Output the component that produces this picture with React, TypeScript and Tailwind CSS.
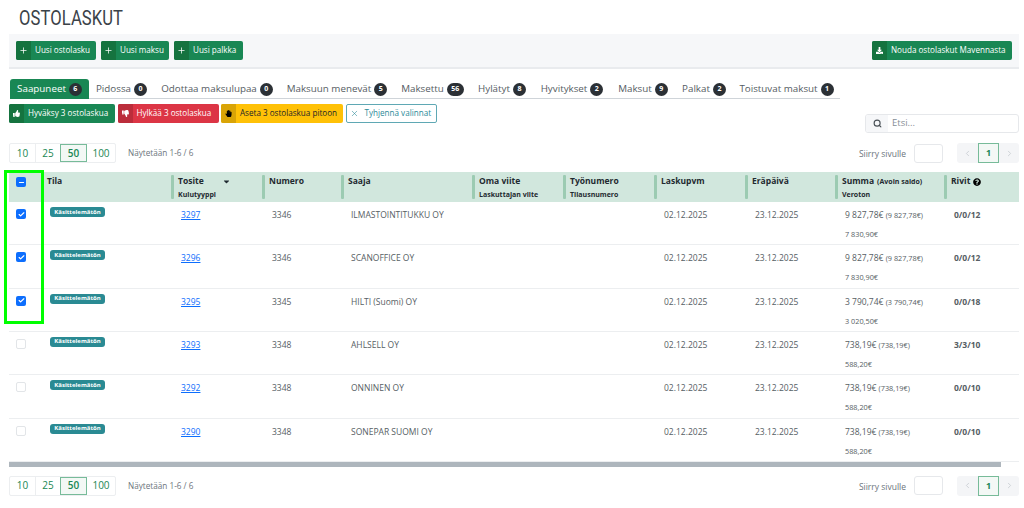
import { ReactNode } from "react";
import { Plus, X, Search, ChevronLeft, ChevronRight, Minus, Check } from "lucide-react";
import {
  FaDownload,
  FaThumbsUp,
  FaThumbsDown,
  FaHandPaper,
  FaCaretDown,
  FaQuestionCircle,
} from "react-icons/fa";

const tabs = [
  { name: "Saapuneet", count: 6, w: "w-[79px]" },
  { name: "Pidossa", count: 0, w: "w-[65px]" },
  { name: "Odottaa maksulupaa", count: 0, w: "w-[126px]" },
  { name: "Maksuun menevät", count: 5, w: "w-[114px]" },
  { name: "Maksettu", count: 56, w: "w-[77px]" },
  { name: "Hylätyt", count: 8, w: "w-[62px]" },
  { name: "Hyvitykset", count: 2, w: "w-[78px]" },
  { name: "Maksut", count: 9, w: "w-[64px]" },
  { name: "Palkat", count: 2, w: "w-[58px]" },
  { name: "Toistuvat maksut", count: 1, w: "w-[107px]" },
];

const rows = [
  { tosite: "3297", numero: "3346", saaja: "ILMASTOINTITUKKU OY", summa: "9 827,78€", avoin: "(9 827,78€)", veroton: "7 830,90€", rivit: "0/0/12", checked: true },
  { tosite: "3296", numero: "3346", saaja: "SCANOFFICE OY", summa: "9 827,78€", avoin: "(9 827,78€)", veroton: "7 830,90€", rivit: "0/0/12", checked: true },
  { tosite: "3295", numero: "3345", saaja: "HILTI (Suomi) OY", summa: "3 790,74€", avoin: "(3 790,74€)", veroton: "3 020,50€", rivit: "0/0/18", checked: true },
  { tosite: "3293", numero: "3348", saaja: "AHLSELL OY", summa: "738,19€", avoin: "(738,19€)", veroton: "588,20€", rivit: "3/3/10", checked: false },
  { tosite: "3292", numero: "3348", saaja: "ONNINEN OY", summa: "738,19€", avoin: "(738,19€)", veroton: "588,20€", rivit: "0/0/10", checked: false },
  { tosite: "3290", numero: "3348", saaja: "SONEPAR SUOMI OY", summa: "738,19€", avoin: "(738,19€)", veroton: "588,20€", rivit: "0/0/10", checked: false },
];

const gridCols =
  "grid grid-cols-[32px_130px_91px_79px_131px_91px_91px_91px_90px_109px_75px]";

function IconButton({
  icon,
  label,
  className,
  iconClass,
  width,
}: {
  icon: ReactNode;
  label: string;
  className: string;
  iconClass: string;
  width: string;
}) {
  return (
    <button className={`flex h-[19px] items-stretch overflow-hidden rounded-[2px] text-[8.1px] ${width} ${className}`}>
      <span className={`flex w-[15px] shrink-0 items-center justify-center ${iconClass}`}>{icon}</span>
      <span className="flex flex-1 items-center whitespace-nowrap pl-[4px]">{label}</span>
    </button>
  );
}

function HeaderCell({ title, sub, extra }: { title: ReactNode; sub?: string; extra?: ReactNode }) {
  return (
    <div className="relative h-[30px] pl-[7px] pt-[3px] font-bold text-[#1f2a30]">
      <span className="absolute left-0 top-[3px] h-[24px] w-[3px] rounded-[1px] bg-[#9ccbb2]" />
      <div className="flex h-[13px] items-center whitespace-nowrap text-[8.5px] leading-none">
        {title}
        {extra}
      </div>
      {sub && <div className="mt-[1px] whitespace-nowrap text-[7px] leading-[11px]">{sub}</div>}
    </div>
  );
}

function RowCheck({ checked }: { checked: boolean }) {
  return checked ? (
    <span className="flex h-[10px] w-[10px] items-center justify-center rounded-[2px] bg-[#0d6efd] text-white">
      <Check size={7} strokeWidth={4} />
    </span>
  ) : (
    <span className="block h-[10px] w-[10px] rounded-[2px] border border-[#e2e5e8] bg-white" />
  );
}

function PageSizes() {
  return (
    <div className="flex h-[20px] w-[107px] overflow-hidden rounded-[2px] border border-[#eceef0] text-[10px] text-[#198754]">
      <span className="flex w-[25px] items-center justify-center">10</span>
      <span className="flex w-[25px] items-center justify-center border-l border-[#eceef0]">25</span>
      <span className="flex w-[27px] items-center justify-center border border-[#77bb99] bg-[#f3f8f5] font-semibold">50</span>
      <span className="flex flex-1 items-center justify-center">100</span>
    </div>
  );
}

function PagerRow({ className }: { className: string }) {
  return (
    <div className={`flex h-[20px] items-center justify-between ${className}`}>
      <div className="flex items-center">
        <PageSizes />
        <span className="ml-[12px] text-[8.2px] text-[#6c757d]">Näytetään 1-6 / 6</span>
      </div>
      <div className="flex items-center">
        <span className="mr-[8px] mt-[2px] text-[8.5px] text-[#6c757d]">Siirry sivulle</span>
        <span className="mr-[14px] block h-[19px] w-[29px] rounded-[3px] border border-[#e6e8eb] bg-white" />
        <div className="flex h-[20px] w-[62px] items-stretch rounded-[3px] bg-[#f4f5f7] text-[#c3c8cd]">
          <span className="flex w-[21px] items-center justify-center"><ChevronLeft size={9} /></span>
          <span className="flex w-[21px] items-center justify-center border border-[#77bb99] bg-[#f3f8f5] text-[9px] font-bold text-[#198754]">1</span>
          <span className="flex w-[20px] items-center justify-center"><ChevronRight size={9} /></span>
        </div>
      </div>
    </div>
  );
}

export default function App() {
  return (
    <div className="relative h-[508px] w-[1024px] overflow-hidden bg-white font-['Open_Sans',sans-serif]">
      <h1 className="h-[34px] pl-[19px] pt-[6px] font-['Roboto',sans-serif] text-[20px] leading-[24px] tracking-[0.1px] text-[#3b4248]">
        <span className="inline-block origin-left scale-x-[0.83]">OSTOLASKUT</span>
      </h1>

      <div className="mx-[9px] flex h-[35px] w-[1010px] items-start justify-between border-b-2 border-[#e9ebee] bg-[#f6f7f9] px-[7px] pt-[7px]">
        <div className="flex gap-[5px]">
          <IconButton width="w-[80px]" label="Uusi ostolasku" className="bg-[#198754] text-white" iconClass="bg-[#15733f]" icon={<Plus size={9} />} />
          <IconButton width="w-[68px]" label="Uusi maksu" className="bg-[#198754] text-white" iconClass="bg-[#15733f]" icon={<Plus size={9} />} />
          <IconButton width="w-[69px]" label="Uusi palkka" className="bg-[#198754] text-white" iconClass="bg-[#15733f]" icon={<Plus size={9} />} />
        </div>
        <IconButton width="w-[140px]" label="Nouda ostolaskut Mavennasta" className="bg-[#198754] text-white" iconClass="bg-[#15733f]" icon={<FaDownload size={7} />} />
      </div>

      <div className="ml-[10px] mt-[10px] flex h-[20px] w-[830px] border-b border-[#cfd4d9]">
        {tabs.map((t, i) => (
          <div
            key={t.name}
            className={`flex h-[20px] items-center justify-center gap-[3px] whitespace-nowrap text-[9.8px] ${t.w} ${
              i === 0 ? "rounded-t-[3px] bg-[#198754] text-white" : "text-[#555c63]"
            }`}
          >
            {t.name}
            <span
              className={`flex h-[13px] items-center justify-center rounded-full bg-[#2b3035] text-[7px] font-bold text-white ${
                t.count > 9 ? "w-[17px]" : "w-[13px]"
              }`}
            >
              {t.count}
            </span>
          </div>
        ))}
      </div>

      <div className="mx-[9px] mt-[5px] flex h-[29px] w-[1010px] items-start justify-between">
        <div className="flex gap-[2.5px]">
          <IconButton width="w-[106px]" label="Hyväksy 3 ostolaskua" className="bg-[#198754] text-white" iconClass="bg-[#15733f]" icon={<FaThumbsUp size={7} />} />
          <IconButton width="w-[101px]" label="Hylkää 3 ostolaskua" className="bg-[#dc3545] text-white" iconClass="bg-[#bb2d3b]" icon={<FaThumbsDown size={7} />} />
          <IconButton width="w-[122px]" label="Aseta 3 ostolaskua pitoon" className="bg-[#ffc107] text-[#212529]" iconClass="bg-[#d9a406] text-black" icon={<FaHandPaper size={7} />} />
          <button className="flex h-[19px] w-[91px] items-center rounded-[2px] border border-[#5fa8b4] bg-white text-[8.1px] text-[#2a8a98]">
            <span className="flex w-[15px] justify-center"><X size={9} strokeWidth={1.5} /></span>
            <span className="whitespace-nowrap pl-[3px]">Tyhjennä valinnat</span>
          </button>
        </div>
        <div className="mt-[10px] flex h-[19px] w-[154px] overflow-hidden rounded-[3px] border border-[#e6e8eb]">
          <span className="flex w-[22px] items-center justify-center bg-[#f6f7f9] text-[#4a5157]"><Search size={9} strokeWidth={3} /></span>
          <span className="flex items-center pl-[4px] text-[9.5px] text-[#868e96]">Etsi...</span>
        </div>
      </div>

      <PagerRow className="mx-[9px] mt-[10px] w-[1010px]" />

      <div className="mx-[9px] mt-[9px] w-[1010px]">
        <div className={`${gridCols} h-[30px] bg-[#d1e7dd]`}>
          <div className="flex justify-center pt-[5px] pr-[8px]">
            <span className="flex h-[10px] w-[10px] items-center justify-center rounded-[2px] bg-[#0d6efd] text-white">
              <Minus size={7} strokeWidth={4} />
            </span>
          </div>
          <div className="pl-[6px] pt-[3px]">
            <div className="flex h-[13px] items-center text-[8.5px] font-bold leading-none text-[#1f2a30]">Tila</div>
          </div>
          <HeaderCell
            title="Tosite"
            sub="Kulutyyppi"
            extra={<FaCaretDown size={9} className="ml-[18px]" />}
          />
          <HeaderCell title="Numero" />
          <HeaderCell title="Saaja" />
          <HeaderCell title="Oma viite" sub="Laskuttajan viite" />
          <HeaderCell title="Työnumero" sub="Tilausnumero" />
          <HeaderCell title="Laskupvm" />
          <HeaderCell title="Eräpäivä" />
          <HeaderCell
            title={
              <>
                Summa
                <span className="ml-[3px] text-[7px]">(Avoin saldo)</span>
              </>
            }
            sub="Veroton"
          />
          <HeaderCell
            title="Rivit"
            extra={<FaQuestionCircle size={8} className="ml-[3px] text-black" />}
          />
        </div>

        {rows.map((r) => (
          <div key={r.tosite} className={`${gridCols} h-[43.33px] border-b border-[#eceef0] text-[8.5px] leading-[13px] text-[#565e64]`}>
            <div className="flex justify-center pt-[7px] pr-[8px]">
              <RowCheck checked={r.checked} />
            </div>
            <div className="pl-[9px] pt-[5px]">
              <span className="flex h-[10px] w-[55px] items-center justify-center rounded-[3px] bg-[#2a8a93] text-[6px] font-bold text-white">
                Käsittelemätön
              </span>
            </div>
            <div className="pl-[10px] pt-[6px]">
              <span className="text-[#0d6efd] underline">{r.tosite}</span>
            </div>
            <div className="pl-[10px] pt-[6px]">{r.numero}</div>
            <div className="pl-[10px] pt-[6px]">{r.saaja}</div>
            <div />
            <div />
            <div className="pl-[10px] pt-[6px]">02.12.2025</div>
            <div className="pl-[10px] pt-[6px]">23.12.2025</div>
            <div className="pl-[10px] pt-[6px]">
              <div className="whitespace-nowrap">
                {r.summa} <span className="text-[7.3px]">{r.avoin}</span>
              </div>
              <div className="mt-[6px] text-[7.3px]">{r.veroton}</div>
            </div>
            <div className="pl-[10px] pt-[6px] font-bold">{r.rivit}</div>
          </div>
        ))}

        <div className="h-[5px] w-[992px] bg-[#aeb6bd]" />
      </div>

      <PagerRow className="mx-[9px] mt-[9px] w-[1010px]" />

      <div className="pointer-events-none absolute left-[4px] top-[170px] h-[154px] w-[40px] border-[3px] border-[#00ff00]" />
    </div>
  );
}
